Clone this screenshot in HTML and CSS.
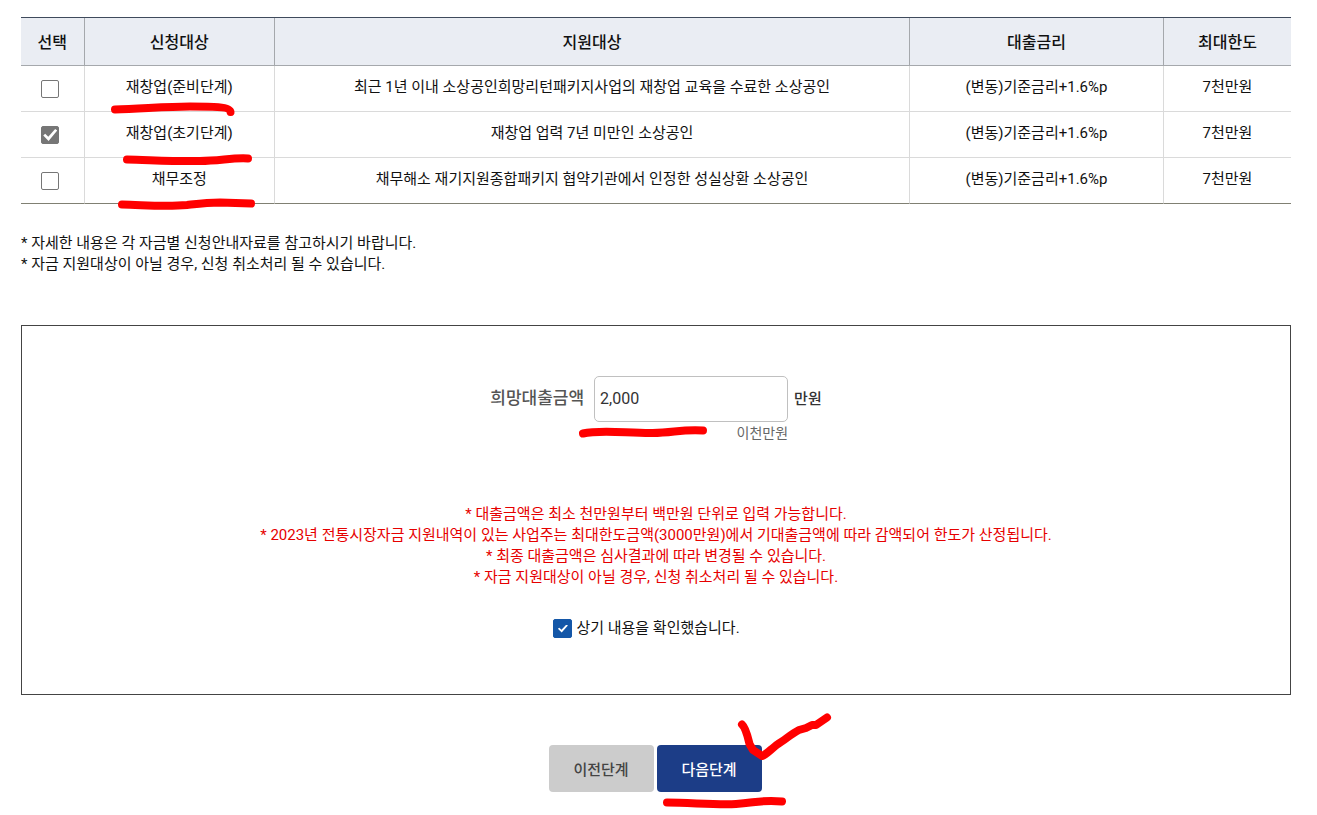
FILE: index.html
```html
<!DOCTYPE html>
<html lang="ko">
<head>
    <meta charset="UTF-8">
    <meta name="viewport" content="width=device-width, initial-scale=1.0">
    <title>대출 신청</title>
    <link rel="stylesheet" href="styles.css">
</head>
<body>
<form class="apply">
  <table class="target-table">
    <colgroup>
      <col class="col-check"><col class="col-name"><col class="col-desc"><col class="col-rate"><col class="col-limit">
    </colgroup>
    <thead>
      <tr>
        <th>선택</th>
        <th>신청대상</th>
        <th>지원대상</th>
        <th>대출금리</th>
        <th>최대한도</th>
      </tr>
    </thead>
    <tbody>
      <tr>
        <td class="check-cell"><input type="checkbox" class="check" id="target1"></td>
        <td><label for="target1">재창업(준비단계)</label></td>
        <td>최근 1년 이내 소상공인희망리턴패키지사업의 재창업 교육을 수료한 소상공인</td>
        <td>(변동)기준금리+1.6%p</td>
        <td>7천만원</td>
      </tr>
      <tr>
        <td class="check-cell"><input type="checkbox" class="check" id="target2" checked></td>
        <td><label for="target2">재창업(초기단계)</label></td>
        <td>재창업 업력 7년 미만인 소상공인</td>
        <td>(변동)기준금리+1.6%p</td>
        <td>7천만원</td>
      </tr>
      <tr>
        <td class="check-cell"><input type="checkbox" class="check" id="target3"></td>
        <td><label for="target3">채무조정</label></td>
        <td>채무해소 재기지원종합패키지 협약기관에서 인정한 성실상환 소상공인</td>
        <td>(변동)기준금리+1.6%p</td>
        <td>7천만원</td>
      </tr>
    </tbody>
  </table>

  <div class="notes">
    <p>* 자세한 내용은 각 자금별 신청안내자료를 참고하시기 바랍니다.</p>
    <p>* 자금 지원대상이 아닐 경우, 신청 취소처리 될 수 있습니다.</p>
  </div>

  <div class="amount-box">
    <div class="amount">
      <label class="amount-label" for="amount">희망대출금액</label>
      <input type="text" class="amount-input" id="amount" value="2,000">
      <span class="amount-unit">만원</span>
      <span class="amount-korean">이천만원</span>
    </div>

    <div class="warning">
      <p>* 대출금액은 최소 천만원부터 백만원 단위로 입력 가능합니다.</p>
      <p>* 2023년 전통시장자금 지원내역이 있는 사업주는 최대한도금액(3000만원)에서 기대출금액에 따라 감액되어 한도가 산정됩니다.</p>
      <p>* 최종 대출금액은 심사결과에 따라 변경될 수 있습니다.</p>
      <p>* 자금 지원대상이 아닐 경우, 신청 취소처리 될 수 있습니다.</p>
    </div>

    <div class="confirm">
      <input type="checkbox" class="check check-blue" id="confirm" checked>
      <label for="confirm">상기 내용을 확인했습니다.</label>
    </div>
  </div>

  <div class="buttons">
    <button type="button" class="btn btn-prev">이전단계</button>
    <button type="button" class="btn btn-next">다음단계</button>
  </div>
</form>

<!-- Пометки маркером поверх страницы -->
<svg class="marks" width="1317" height="815" viewBox="0 0 1317 815" aria-hidden="true">
  <path d="M115 109.500C140 109 165 106.500 190 106.500C212 106.500 230 106.500 230.500 112"/>
  <path d="M127 159.500C150 160 175 161.500 200 161C220 161 232 157.500 248 158.500"/>
  <path d="M122 204.500C145 205 165 207 187 205C200 203.500 207 202.500 220 202.500L251 203.500"/>
  <path d="M583 433.500C600 429.500 625 433 650 433C672 433.500 680 429 703 430.500"/>
  <path d="M667 802.500C690 802.500 715 805 736 804C755 803 760 799.500 782 801.500"/>
  <path d="M742 724.500C746 728 748 738 749.500 744L753 750L762 756C766 755 772 748 778 744C785 740 791 734 799 730L806 728L812 725H816L827 717.500"/>
</svg>
</body>
</html>
```
FILE: styles.css
```css
* {
  box-sizing: border-box;
}

body {
  position: relative;
  margin: 0;
  padding: 17px 26px 23px 21px;
  background: #fff;
  color: #111;
  font-family: Roboto, "Noto Sans CJK KR", sans-serif;
  font-size: 15px;
  line-height: 21px;
}

p {
  margin: 0;
}

/* таблица */
.target-table {
  width: 100%;
  table-layout: fixed;
  border-collapse: separate;
  border-spacing: 0;
  border-top: 1px solid #3f4a5c;
  text-align: center;
}

.col-check {
  width: 5%;
}

.col-name {
  width: 15%;
}

.col-desc {
  width: 50%;
}

.col-rate {
  width: 20%;
}

.col-limit {
  width: 10%;
}

.target-table th {
  height: 48px;
  padding: 1px 0 0;
  background: #eaedf3;
  border-right: 1px solid #a5a8ac;
  border-bottom: 1px solid #a5a8ac;
  font-size: 16px;
  font-weight: 500;
}

.target-table td {
  height: 46px;
  padding: 0 0 2px;
  border-right: 1px solid #dadada;
  border-bottom: 1px solid #dadada;
}

.target-table th:last-child,
.target-table td:last-child {
  border-right: 0;
}

.target-table tbody tr:last-child td {
  border-bottom-color: #808073;
}

.target-table .check-cell {
  padding: 0 4px 0 0;
}

/* чекбоксы */
.check {
  appearance: none;
  display: inline-block;
  width: 18px;
  height: 18px;
  margin: 0;
  border: 1px solid #767676;
  border-radius: 2px;
  background: #fff;
  vertical-align: middle;
}

.check:checked {
  display: inline-grid;
  place-items: center;
  background: #767676;
}

.check:checked::after {
  content: "";
  width: 14px;
  height: 12px;
  background: #fff;
  clip-path: polygon(0 53%, 14% 40%, 36% 65%, 85% 0, 100% 12%, 38% 100%);
}

.check-blue {
  width: 19px;
  height: 19px;
}

.check-blue:checked {
  border-color: #1457a8;
  background: #1457a8;
}

.check-blue:checked::after {
  width: 10px;
  height: 8px;
}

.notes {
  margin-top: 29px;
}

/* сумма кредита */
.amount-box {
  margin-top: 50px;
  padding: 50px 20px 55px;
  border: 1px solid #444;
}

.amount {
  display: grid;
  grid-template-columns: auto 194px auto;
  justify-content: center;
  align-items: center;
  column-gap: 6px;
}

.amount-label {
  padding: 0 4px 2px 0;
  color: #555;
  font-size: 17px;
  font-weight: 500;
}

.amount-input {
  width: 100%;
  height: 46px;
  padding: 0 5px 2px;
  border: 1px solid #c0c0c0;
  border-radius: 5px;
  color: #333;
  font-family: inherit;
  font-size: 16px;
}

.amount-unit {
  color: #333;
  font-weight: 500;
}

.amount-korean {
  grid-column: 2;
  justify-self: end;
  padding-top: 1px;
  color: #666;
  font-size: 14px;
}

.warning {
  margin-top: 60px;
  color: #e60000;
  text-align: center;
}

.confirm {
  display: flex;
  justify-content: center;
  align-items: center;
  gap: 4px;
  margin-top: 30px;
  padding-right: 19px;
}

.buttons {
  display: flex;
  justify-content: center;
  gap: 3px;
  margin-top: 50px;
  padding-right: 2px;
}

.btn {
  width: 105px;
  height: 47px;
  padding: 0;
  border: none;
  border-radius: 4px;
  font-family: inherit;
  font-size: 15px;
  font-weight: 500;
  cursor: pointer;
}

.btn-prev {
  background: #ccc;
  color: #444;
}

.btn-next {
  background: #1c3d87;
  color: #fff;
}

.marks {
  position: absolute;
  top: 0;
  left: 0;
  fill: none;
  stroke: #f00;
  stroke-width: 8;
  stroke-linecap: round;
  stroke-linejoin: round;
  pointer-events: none;
}
```
